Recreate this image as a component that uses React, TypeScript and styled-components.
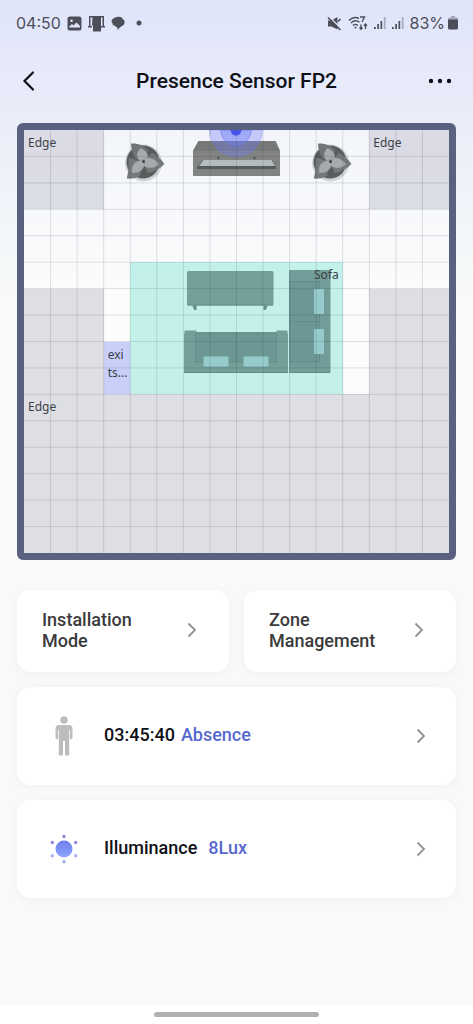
import React from "react";
import styled, { createGlobalStyle } from "styled-components";

const GlobalStyle = createGlobalStyle`
  * { box-sizing: border-box; }
  body {
    margin: 0;
    font-family: Roboto, "Liberation Sans", sans-serif;
    background: #f8faf9;
  }
`;

const Screen = styled.div`
  display: flex;
  flex-direction: column;
  min-height: 100vh;
  background: linear-gradient(#e0e4fa 0, #e9edf9 110px, #f8faf9 290px);
`;

const StatusBar = styled.div`
  display: flex;
  align-items: center;
  justify-content: space-between;
  height: 46px;
  padding: 0 15px 0 16px;
  color: #4c4e5a;
  font: 400 16px/20px Inter, Roboto, sans-serif;
`;

const StatusGroup = styled.div<{ $gap: number }>`
  display: flex;
  align-items: center;
  gap: ${(p) => p.$gap}px;
`;

const Header = styled.header`
  display: flex;
  align-items: center;
  justify-content: space-between;
  height: 70px;
  padding: 0 17px;
`;

const Title = styled.h1`
  margin: 0;
  color: #101018;
  font-size: 21px;
  line-height: 28px;
  font-weight: 500;
`;

const IconButton = styled.button`
  display: flex;
  align-items: center;
  justify-content: center;
  width: 32px;
  height: 32px;
  padding: 0;
  border: 0;
  background: none;
  color: #101018;
  cursor: pointer;
`;

const Content = styled.main`
  display: flex;
  flex: 1;
  flex-direction: column;
  gap: 15px;
  padding: 7px 17px 24px;
`;

const RoomMap = styled.section`
  display: grid;
  grid-template-columns: repeat(16, minmax(0, 1fr));
  grid-template-rows: repeat(16, minmax(0, 1fr));
  aspect-ratio: 439 / 437;
  min-height: 0;
  margin-bottom: 15px;
  border: 7px solid #5a607f;
  border-radius: 6px;
  background: #ffffff66;
`;

const MapLayer = styled.svg`
  grid-area: 1 / 1 / -1 / -1;
  width: 100%;
  height: 100%;
  min-height: 0;
`;

const zoneFills = {
  edge: "rgba(180, 180, 194, 0.4)",
  sofa: "rgba(140, 230, 218, 0.5)",
  exit: "rgba(150, 164, 250, 0.5)",
};

const Zone = styled.div<{ $area: string; $kind: keyof typeof zoneFills; $end?: boolean }>`
  grid-area: ${(p) => p.$area};
  padding: 4px;
  background: ${(p) => zoneFills[p.$kind]};
  color: #3c3f45;
  font: 400 12px/18px "Noto Sans", sans-serif;
  text-align: ${(p) => (p.$end ? "right" : "left")};
`;

const ModeGrid = styled.div`
  display: grid;
  grid-template-columns: 1fr 1fr;
  gap: 15px;
`;

const Card = styled.button`
  display: flex;
  align-items: center;
  border: 0;
  border-radius: 14px;
  background: #fff;
  box-shadow: 0 2px 10px rgba(40, 60, 60, 0.04);
  color: #101018;
  font: 500 18px/21px Roboto, sans-serif;
  text-align: left;
  cursor: pointer;
`;

const ModeCard = styled(Card)`
  justify-content: space-between;
  height: 82px;
  padding: 0 32px 2px 25px;
  color: #3a3a3c;
`;

const InfoCard = styled(Card)`
  height: 98px;
  padding: 0 30px;
`;

const InfoIcon = styled.span`
  display: flex;
  justify-content: center;
  width: 34px;
  margin-right: 23px;
`;

const InfoText = styled.span<{ $gap: number }>`
  display: flex;
  flex: 1;
  gap: ${(p) => p.$gap}px;
  padding-bottom: 3px;
`;

const Value = styled.span`
  color: #5768cf;
`;

const NavBar = styled.footer`
  display: flex;
  align-items: center;
  justify-content: center;
  height: 19px;
  background: #fff;
`;

const Handle = styled.span`
  width: 35%;
  height: 5px;
  border-radius: 3px;
  background: #b0b0b0;
`;

const Chevron = () => (
  <svg width="10" height="16" viewBox="0 0 10 16" fill="none" stroke="#929292" strokeWidth="1.8">
    <path d="M1.5 1.5 8 8l-6.500 6.500" />
  </svg>
);

const Signal = () => (
  <svg width="12" height="14" viewBox="0 0 12 14" fill="currentColor">
    <path d="M0 11h1.800v2H0zM3.300 8h1.700v5H3.300zM6.500 5h1.700v8H6.500z" />
    <path d="M9.800 1h1.700v12H9.800z" opacity=".4" />
  </svg>
);

const Plant = ({ x }: { x: number }) => (
  <g transform={`translate(${x} 0)`}>
    <circle cx="119.500" cy="33" r="18.500" fill="#b9bbbd" opacity=".6" />
    <circle cx="119" cy="32" r="16.500" fill="#575c5c" />
    <path d="M107 13.500c7-.5 13 2 17.500 7L119 32l-8-4c-2-4-4-9-4-14.500z" fill="#6f7575" />
    <path d="M140.500 34c-5 5-11 8-17 9l-4.500-11 9-9c5 2 9 6 12.500 11z" fill="#747a7a" />
    <path d="M102.700 48.500c2-7 2-14 2-21l14.300 4.500-3 14c-4 2-8 3-13.300 2.500z" fill="#747a7a" />
    <g fill="#a5abae" stroke="#858b8d" strokeWidth=".5">
      <path d="M119 33c-7-4-8-9-2.500-15 7 3 9.500 9 5.500 15z" />
      <path d="M118 30c6-4 13-2 17 4.500-6 5-13 4.500-17-.5z" />
      <path d="M121 30c0 9-5 13.500-13 13-1-8 3-13 13-13z" />
    </g>
    <circle cx="119.500" cy="31.500" r="1.500" fill="#3f4448" />
  </g>
);

const Furniture = () => (
  <MapLayer viewBox="0 0 425 423" preserveAspectRatio="none" aria-hidden="true">
    <Plant x={0} />
    <Plant x={187} />
    <path d="M174.500 11h77l4.500 10v25h-87V21z" fill="#828484" />
    <path d="M174.500 11h77l4.500 10h-87z" fill="#777979" />
    <path d="M179 30h69l4 7v2h-79v-2z" fill="#565b5d" />
    <path d="M179.500 30h68l3.500 6h-76z" fill="#b4bcc0" />
    <circle cx="194.500" cy="28" r="1.200" fill="#505558" />
    <circle cx="230.500" cy="28" r="1.200" fill="#505558" />
    <g fill="#6c7cf5" stroke="#6c7cf5">
      <path d="M185.500 0a26.500 26.500 0 0 0 53 0z" fillOpacity=".35" strokeOpacity=".35" />
      <path d="M196.500 0a15.500 15.500 0 0 0 31 0z" fillOpacity=".4" strokeOpacity=".5" />
      <path d="M206.500 0a5.500 5.500 0 0 0 11 0z" fill="#4656ea" stroke="none" />
    </g>
    <path d="m168 174 2 6h2.500v-6zM244 174l-2 6h-2.500v-6z" fill="#3b3b42" />
    <rect x="163" y="141" width="86.500" height="34.500" rx="1.500" fill="#5b585d" />
    <path d="M163.500 175h85.500" stroke="#3b3b42" />
    <rect x="160" y="202" width="104" height="41" rx="1.500" fill="#5b585d" />
    <path d="M160.500 201.500h11v40M263.500 201.500h-11" stroke="#5b585d" strokeWidth="2" fill="none" />
    <path d="M171.500 203h81v29h-81z" fill="#4c484e" stroke="#2d2d32" strokeWidth=".8" />
    <path d="M212 203v29M160 242.500h104" stroke="#2d2d32" strokeWidth=".8" />
    <rect x="265" y="140" width="41.500" height="103" rx="1" fill="#565358" />
    <path d="M266 151.500h29.500v80.500H266z" fill="#4c484e" stroke="#2d2d32" strokeWidth=".8" />
    <path d="M266 191.500h30M265 242.500h41" stroke="#2d2d32" strokeWidth=".8" />
    <g fill="#9eb0ba">
      <rect x="179.500" y="226.500" width="25" height="10" rx="1" />
      <rect x="219.500" y="226.500" width="25" height="10" rx="1" />
      <rect x="290" y="159" width="10" height="25" rx="1" />
      <rect x="290" y="199" width="10" height="25" rx="1" />
    </g>
  </MapLayer>
);

const steps = Array.from({ length: 15 }, (_, i) => i + 1);

const GridLines = () => (
  <MapLayer viewBox="0 0 16 16" preserveAspectRatio="none" aria-hidden="true">
    <path
      d={steps.map((n) => `M${n} 0V16M0 ${n}H16`).join("")}
      stroke="#30303c"
      strokeOpacity=".14"
      vectorEffect="non-scaling-stroke"
    />
  </MapLayer>
);

export default function App() {
  return (
    <>
      <GlobalStyle />
      <Screen>
        <StatusBar>
          <StatusGroup $gap={6}>
            <span>04:50</span>
            <svg width="15" height="15" viewBox="0 0 15 15" fill="currentColor">
              <path
                fillRule="evenodd"
                d="M3 .5h9A2.500 2.500 0 0 1 14.500 3v9a2.500 2.500 0 0 1-2.500 2.500H3A2.500 2.500 0 0 1 .5 12V3A2.500 2.500 0 0 1 3 .5zM2 11.500h11v-1.500L9.500 6.500 6.500 9.500 5 8l-3 3zM4.500 3.500a1.300 1.300 0 1 0 0 2.600 1.300 1.300 0 0 0 0-2.600z"
              />
            </svg>
            <svg width="17" height="17" viewBox="0 0 17 17" fill="currentColor">
              <path d="M1 1h15v10h1v1.500h-4V11h1.500V2.500h-12V11H4v1.500H0V11h1z" />
              <path d="M4.500 2h8.500v14.500H5V10.500H4z" />
            </svg>
            <svg width="14" height="15" viewBox="0 0 14 15" fill="currentColor">
              <path d="M6 1c3-.6 5 .3 5.700 2C13 3.600 14 5 13.500 7c-.4 2-1.800 3-3.500 3.500L6.500 14V11.500C4.500 11 3.500 10 3.500 9L1.500 9.500 2 8C-.6 6 .2 1.800 6 1z" />
            </svg>
            <svg width="20" height="6" viewBox="0 0 20 6" fill="currentColor">
              <circle cx="8" cy="3" r="2.500" />
            </svg>
          </StatusGroup>
          <StatusGroup $gap={6}>
            <svg width="15" height="15" viewBox="0 0 15 15" fill="currentColor">
              <path d="M1 4.500h3.500L10.500 1v12.500L4.500 10.500H1z" />
              <path d="m2 .5 12 12" stroke="#e4e8f9" strokeWidth="1.200" />
              <path d="m1 1.500 12.500 12.500M11 5.500l2.500-2.500" stroke="currentColor" strokeWidth="1.600" />
            </svg>
            <svg width="20" height="16" viewBox="0 0 20 16" fill="none" stroke="currentColor" strokeWidth="1.400">
              <path d="M1 5.500C4 2.500 8 2 11 3.500M3 8c2.500-2.500 6-2.500 8.500-.8M5 10.500c1.500-1.500 3.500-1.500 5 0" />
              <path d="M12 2h4.500l-2.500 5M13 9.500v5M11.500 12.500l1.500 1.700 1.500-1.700M17.500 14V9M16 10.700l1.500-1.700 1.500 1.700" />
              <circle cx="7.500" cy="12.500" r="1" fill="currentColor" stroke="none" />
            </svg>
            <Signal />
            <Signal />
            <StatusGroup $gap={3}>
              <span>83%</span>
              <svg width="10" height="14" viewBox="0 0 10 14" fill="currentColor">
                <path d="M3 0h4v1.500h1.500A1.500 1.500 0 0 1 10 3v1H0V3a1.500 1.500 0 0 1 1.500-1.500H3z" opacity=".4" />
                <path d="M0 3.500h10v8.500a1.500 1.500 0 0 1-1.500 1.500h-7A1.500 1.500 0 0 1 0 12z" />
              </svg>
            </StatusGroup>
          </StatusGroup>
        </StatusBar>

        <Header>
          <IconButton aria-label="Back">
            <svg width="24" height="24" viewBox="0 0 24 24" fill="none" stroke="currentColor" strokeWidth="2.200" strokeLinecap="round">
              <path d="M12 3.500 3.500 12l8.500 8.500" />
            </svg>
          </IconButton>
          <Title>Presence Sensor FP2</Title>
          <IconButton aria-label="More options">
            <svg width="24" height="6" viewBox="0 0 24 6" fill="currentColor">
              <circle cx="3" cy="3" r="2.200" />
              <circle cx="12" cy="3" r="2.200" />
              <circle cx="21" cy="3" r="2.200" />
            </svg>
          </IconButton>
        </Header>

        <Content>
          <RoomMap aria-label="Room map">
            <Furniture />
            <Zone $kind="edge" $area="1 / 1 / 4 / 4">Edge</Zone>
            <Zone $kind="edge" $area="1 / 14 / 4 / 17">Edge</Zone>
            <Zone $kind="edge" $area="7 / 1 / 11 / 4" />
            <Zone $kind="edge" $area="7 / 14 / 11 / 17" />
            <Zone $kind="edge" $area="11 / 1 / 17 / 17">Edge</Zone>
            <Zone $kind="sofa" $area="6 / 5 / 11 / 13" $end>Sofa</Zone>
            <Zone $kind="exit" $area="9 / 4 / 11 / 5">exi<br />ts...</Zone>
            <GridLines />
          </RoomMap>

          <ModeGrid>
            <ModeCard>
              <span>Installation<br />Mode</span>
              <Chevron />
            </ModeCard>
            <ModeCard>
              <span>Zone<br />Management</span>
              <Chevron />
            </ModeCard>
          </ModeGrid>

          <InfoCard>
            <InfoIcon>
              <svg width="18" height="40" viewBox="0 0 18 40" fill="#bdbdbd">
                <circle cx="9" cy="4" r="3.800" />
                <path d="M4 9h10a3.500 3.500 0 0 1 3.500 3.500V22a1.300 1.300 0 0 1-2.600 0v-8h-.7v24a1.600 1.600 0 0 1-1.600 1.600h-1A1.600 1.600 0 0 1 10 38V25H8v13a1.600 1.600 0 0 1-1.600 1.600h-1A1.600 1.600 0 0 1 3.800 38V14h-.7v8a1.300 1.300 0 0 1-2.600 0v-9.500A3.500 3.500 0 0 1 4 9z" />
              </svg>
            </InfoIcon>
            <InfoText $gap={6}>
              <span>03:45:40</span>
              <Value>Absence</Value>
            </InfoText>
            <Chevron />
          </InfoCard>

          <InfoCard>
            <InfoIcon>
              <svg width="30" height="30" viewBox="0 0 30 30">
                <defs>
                  <linearGradient id="sun" x1="0" y1="0" x2="0" y2="1">
                    <stop offset="0" stopColor="#6c7eee" />
                    <stop offset="1" stopColor="#8fa6fa" />
                  </linearGradient>
                </defs>
                <circle cx="15" cy="15" r="8.500" fill="url(#sun)" />
                <g fill="#8c84e0">
                  <circle cx="15" cy="2.500" r="1.700" />
                  <circle cx="3.300" cy="8.500" r="1.700" />
                  <circle cx="26.700" cy="8.500" r="1.700" />
                </g>
                <g fill="#a9b2f0">
                  <circle cx="3.300" cy="21.800" r="1.700" />
                  <circle cx="26.700" cy="21.800" r="1.700" />
                  <circle cx="15" cy="27.800" r="1.700" />
                </g>
              </svg>
            </InfoIcon>
            <InfoText $gap={11}>
              <span>Illuminance</span>
              <Value>8Lux</Value>
            </InfoText>
            <Chevron />
          </InfoCard>
        </Content>

        <NavBar>
          <Handle />
        </NavBar>
      </Screen>
    </>
  );
}
